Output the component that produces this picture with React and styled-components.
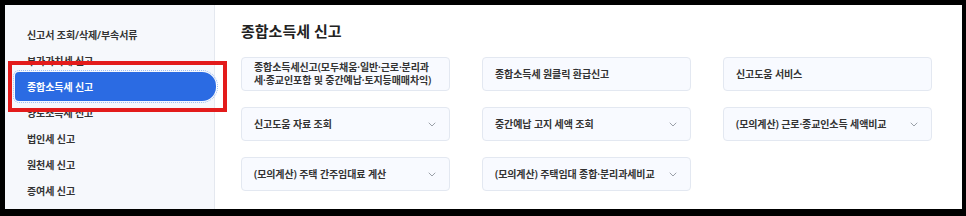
import React from 'react'
import styled, { createGlobalStyle } from 'styled-components'

const GlobalStyle = createGlobalStyle`
  html, body { margin: 0; padding: 0; background: #000; }
  body { font-family: "Noto Sans", "Noto Sans CJK KR", sans-serif; }
`

const Frame = styled.div`
  position: relative;
  width: 966px;
  height: 216px;
  box-sizing: border-box;
  padding: 5px 4px 7px 5px;
  background: #000;
`

const Screen = styled.div`
  display: flex;
  height: 100%;
  background: #fff;
`

const Sidebar = styled.nav`
  width: 210px;
  flex: none;
  box-sizing: border-box;
  padding: 16px 0 0 10px;
  background: #f6f8fc;
  border-right: 1px solid #e4e8ef;
`

const MenuItem = styled.div`
  display: flex;
  align-items: center;
  height: 26px;
  padding-left: 12px;
  font-size: 10px;
  font-weight: 600;
  color: #333;
  letter-spacing: -0.1px;
  white-space: nowrap;
`

const ActiveItem = styled(MenuItem)`
  width: 201px;
  height: 29px;
  margin: -1px 0 -2px;
  box-sizing: border-box;
  background: #2b6be3;
  color: #fff;
  font-weight: 700;
  border-radius: 4px 14px 14px 4px;
  outline: 1.5px dotted #9dbdf3;
  outline-offset: 1px;
`

const Main = styled.main`
  flex: 1;
  padding: 16px 0 0 26px;
`

const Title = styled.h2`
  margin: 0 0 16px;
  font-size: 15px;
  line-height: 20px;
  font-weight: 700;
  color: #222;
`

const Grid = styled.div`
  display: grid;
  grid-template-columns: repeat(3, 209px);
  grid-auto-rows: 34px;
  column-gap: 32px;
  row-gap: 16px;
`

const Card = styled.div`
  display: flex;
  align-items: center;
  justify-content: space-between;
  box-sizing: border-box;
  padding: 0 13px 0 12px;
  background: #f8faff;
  border: 1px solid #e3e8f1;
  border-radius: 4px;
  font-size: 10px;
  line-height: 13px;
  font-weight: 600;
  color: #333;
  letter-spacing: -0.1px;
  white-space: nowrap;
`

const Marker = styled.div`
  position: absolute;
  left: 8px;
  top: 61px;
  width: 219px;
  height: 51px;
  box-sizing: border-box;
  border: 4px solid #e31b1b;
  pointer-events: none;
`

const Chevron = () => (
  <svg width="8" height="5" viewBox="0 0 8 5" fill="none">
    <path d="M1 1l3 3 3-3" stroke="#9aa0a8" strokeWidth="1" strokeLinecap="round" strokeLinejoin="round" />
  </svg>
)

const menuItems = [
  '신고서 조회/삭제/부속서류',
  '부가가치세 신고',
  '종합소득세 신고',
  '양도소득세 신고',
  '법인세 신고',
  '원천세 신고',
  '증여세 신고',
]

const cards = [
  { title: <>종합소득세신고(모두채움·일반·근로·분리과<br />세·종교인포함 및 중간예납·토지등매매차익)</> },
  { title: '종합소득세 원클릭 환급신고' },
  { title: '신고도움 서비스' },
  { title: '신고도움 자료 조회', drop: true },
  { title: '중간예납 고지 세액 조회', drop: true },
  { title: '(모의계산) 근로·종교인소득 세액비교', drop: true },
  { title: '(모의계산) 주택 간주임대료 계산', drop: true },
  { title: '(모의계산) 주택임대 종합·분리과세비교', drop: true },
]

export default function App() {
  const active = '종합소득세 신고'

  return (
    <Frame>
      <GlobalStyle />
      <Screen>
        <Sidebar>
          {menuItems.map((item, index) =>
            item === active
              ? <ActiveItem key={index}>{item}</ActiveItem>
              : <MenuItem key={index}>{item}</MenuItem>
          )}
        </Sidebar>
        <Main>
          <Title>종합소득세 신고</Title>
          <Grid>
            {cards.map((card, index) => (
              <Card key={index}>
                <span>{card.title}</span>
                {card.drop && <Chevron />}
              </Card>
            ))}
          </Grid>
        </Main>
      </Screen>
      <Marker />
    </Frame>
  )
}
